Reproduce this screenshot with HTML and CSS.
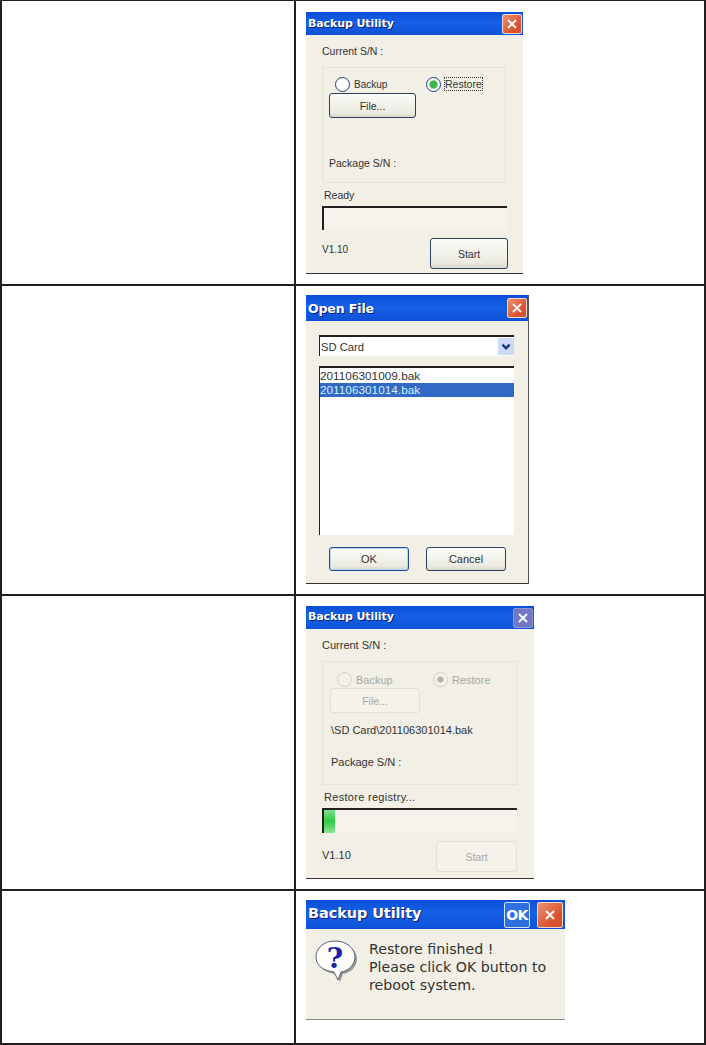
FILE: index.html
```html
<!DOCTYPE html>
<html lang="en">
<head>
    <meta charset="UTF-8">
    <meta name="viewport" content="width=device-width, initial-scale=1.0">
    <title>Backup Utility - Restore</title>
    <link rel="stylesheet" href="styles.css">
</head>
<body>
    <div class="sheet">
        <div class="row row-first">
            <div class="cell-left"></div>
            <div class="cell-right">
                <div class="dialog dialog-ready">
                    <div class="titlebar">
                        <span class="title">Backup Utility</span>
                        <span class="close"><svg viewBox="0 0 12 12"><path d="M2 2l8 8M10 2l-8 8"/></svg></span>
                    </div>
                    <div class="label sn">Current S/N :</div>
                    <div class="group">
                        <div class="radios">
                            <span class="option"><i class="radio"></i>Backup</span>
                            <span class="option"><i class="radio radio-on"></i><b class="focus">Restore</b></span>
                        </div>
                        <div class="btn btn-file">File...</div>
                        <div class="label package">Package S/N :</div>
                    </div>
                    <div class="label status">Ready</div>
                    <div class="progress"></div>
                    <div class="footer">
                        <span class="label version">V1.10</span>
                        <div class="btn btn-start">Start</div>
                    </div>
                </div>
            </div>
        </div>

        <div class="row row-second">
            <div class="cell-left"></div>
            <div class="cell-right">
                <div class="dialog dialog-open">
                    <div class="titlebar">
                        <span class="title">Open File</span>
                        <span class="close"><svg viewBox="0 0 12 12"><path d="M2 2l8 8M10 2l-8 8"/></svg></span>
                    </div>
                    <div class="combo">
                        <span>SD Card</span>
                        <span class="combo-arrow"><svg viewBox="0 0 10 10"><path d="M2 3l3 3 3-3"/></svg></span>
                    </div>
                    <div class="filelist">
                        <div class="file">201106301009.bak</div>
                        <div class="file file-selected">201106301014.bak</div>
                    </div>
                    <div class="actions">
                        <div class="btn btn-ok">OK</div>
                        <div class="btn btn-cancel">Cancel</div>
                    </div>
                </div>
            </div>
        </div>

        <div class="row row-third">
            <div class="cell-left"></div>
            <div class="cell-right">
                <div class="dialog dialog-running">
                    <div class="titlebar">
                        <span class="title">Backup Utility</span>
                        <span class="close close-off"><svg viewBox="0 0 12 12"><path d="M2 2l8 8M10 2l-8 8"/></svg></span>
                    </div>
                    <div class="label sn">Current S/N :</div>
                    <div class="group">
                        <div class="radios">
                            <span class="option option-off"><i class="radio"></i>Backup</span>
                            <span class="option option-off"><i class="radio radio-off"></i>Restore</span>
                        </div>
                        <div class="btn btn-file btn-off">File...</div>
                        <div class="label path">\SD Card\201106301014.bak</div>
                        <div class="label package">Package S/N :</div>
                    </div>
                    <div class="label status">Restore registry...</div>
                    <div class="progress"><div class="progress-chunk"></div></div>
                    <div class="footer">
                        <span class="label version">V1.10</span>
                        <div class="btn btn-start btn-off">Start</div>
                    </div>
                </div>
            </div>
        </div>

        <div class="row row-last">
            <div class="cell-left"></div>
            <div class="cell-right">
                <div class="dialog dialog-message">
                    <div class="titlebar">
                        <span class="title">Backup Utility</span>
                        <span class="ok-button">OK</span>
                        <span class="close"><svg viewBox="0 0 12 12"><path d="M2 2l8 8M10 2l-8 8"/></svg></span>
                    </div>
                    <div class="message">
                        <svg class="question" viewBox="0 0 44 44">
                            <path class="question-shadow" d="M22 3C33 3 42 10 42 19c0 8-7 14-14 15l-3 8-4-8C10 33 3 27 3 19 3 10 11 3 22 3z"/>
                            <path class="question-bubble" d="M20 1C31 1 40 8 40 17c0 8-7 14-14 15l-3 8-4-8C8 31 1 25 1 17 1 8 9 1 20 1z"/>
                            <text x="20" y="28" class="question-mark">?</text>
                        </svg>
                        <div class="message-text">Restore finished !<br>Please click OK button to<br>reboot system.</div>
                    </div>
                </div>
            </div>
        </div>
    </div>
</body>
</html>
```

FILE: styles.css
```css
* {
    box-sizing: border-box;
}

body {
    margin: 0;
    padding: 0;
    background-color: #fff;
    font-family: "Liberation Sans", Arial, sans-serif;
    color: #333;
}

.sheet {
    width: 706px;
    height: 1045px;
    border-top: 1px solid #231f20;
    border-left: 2px solid #231f20;
    border-right: 2px solid #231f20;
    display: flex;
    flex-direction: column;
}

.row {
    display: grid;
    grid-template-columns: 292px 1fr;
    border-bottom: 2px solid #231f20;
}

.row-first { height: 285px; }
.row-second { height: 310px; }
.row-third { height: 295px; }
.row-last { height: 154px; }

.cell-right {
    border-left: 2px solid #231f20;
    padding-left: 10px;
}

.row-first .cell-right { padding-top: 11px; }
.row-second .cell-right { padding-top: 9px; }
.row-third .cell-right { padding-top: 10px; }
.row-last .cell-right { padding-top: 9px; }

/* dialogs */
.dialog {
    background-color: #f1efe6;
    border-bottom: 1px solid #333;
}

.dialog-ready {
    width: 217px;
    height: 262px;
    padding-left: 16px;
}

.dialog-open {
    width: 223px;
    height: 289px;
    border-right: 1px solid #555;
    padding-left: 13px;
}

.dialog-running {
    width: 228px;
    height: 273px;
    padding-left: 16px;
}

.dialog-message {
    width: 259px;
    height: 120px;
    border-bottom-color: #888;
}

.titlebar {
    display: flex;
    align-items: center;
    justify-content: space-between;
    height: 23px;
    padding: 0 1px 0 2px;
    background: linear-gradient(to bottom, #0a4fd6, #1460e6 45%, #0f52d8);
}

.dialog-ready .titlebar,
.dialog-running .titlebar {
    margin-left: -16px;
}

.dialog-running .title {
    margin-bottom: 2px;
}

.dialog-open .titlebar {
    height: 26px;
    margin-left: -13px;
}

.dialog-message .titlebar {
    height: 29px;
}

.title {
    font-family: "DejaVu Sans", sans-serif;
    font-size: 11px;
    font-weight: bold;
    letter-spacing: -0.1px;
    color: #fff;
    text-shadow: 1px 1px 0 #0b1f70;
}

.dialog-open .title {
    font-size: 12.5px;
}

.dialog-message .title {
    flex: 1;
    margin-bottom: 3px;
    font-size: 14.5px;
}

.close {
    display: flex;
    align-items: center;
    justify-content: center;
    width: 20px;
    height: 20px;
    border: 1px solid #f2d6cc;
    border-radius: 2px;
    background: linear-gradient(135deg, #ec9272, #d8512e 70%);
}

.close svg {
    width: 12px;
    height: 12px;
    fill: none;
    stroke: #fff;
    stroke-width: 1.8;
}

.close-off {
    border-color: #8f94d6;
    background: #7277c4;
}

.dialog-message .close {
    width: 26px;
    height: 26px;
    margin-left: 7px;
    margin-right: 1px;
}

.ok-button {
    display: flex;
    align-items: center;
    justify-content: center;
    width: 26px;
    height: 26px;
    border: 1px solid #cfe0fa;
    border-radius: 2px;
    background-color: #2f6fe0;
    color: #fff;
    font-family: "DejaVu Sans", sans-serif;
    font-size: 14px;
    font-weight: bold;
    letter-spacing: -0.5px;
}

.label {
    font-size: 10.5px;
    line-height: 16px;
    white-space: nowrap;
}

.dialog-running .label {
    font-size: 11px;
}

.sn {
    margin-top: 8px;
}

.group {
    margin-top: 8px;
    border: 1px solid #e6e3d7;
    padding-top: 7px;
    padding-left: 6px;
}

.dialog-ready .group {
    width: 184px;
    height: 116px;
}

.dialog-running .group {
    width: 195px;
    height: 124px;
    padding-top: 9px;
    padding-left: 7px;
}

.radios {
    display: flex;
    height: 18px;
    padding-left: 6px;
}

.option {
    display: flex;
    flex: none;
    align-items: center;
    gap: 4px;
    width: 91px;
    font-size: 10px;
}

.dialog-running .radios {
    height: 17px;
    padding-left: 7px;
}

.dialog-running .option {
    width: 96px;
}

.option-off {
    color: #a9a79c;
    font-size: 11px;
}

.radio {
    display: block;
    flex: none;
    width: 15px;
    height: 15px;
    border: 1px solid #1f3f78;
    border-radius: 50%;
    background-color: #fff;
}

.radio-on {
    background: radial-gradient(circle, #3fb54a 0, #3fb54a 35%, #fff 55%);
}

.option-off .radio {
    border-color: #d4d2c6;
    background-color: #f3f1e8;
}

.radio-off {
    background: radial-gradient(circle, #b3b1a5 0, #b3b1a5 30%, #f3f1e8 36%);
}

.focus {
    font-size: 10.5px;
    font-weight: normal;
    outline: 1px dotted #333;
}

.btn {
    display: flex;
    align-items: center;
    justify-content: center;
    border: 1px solid #2c3f5c;
    border-radius: 3px;
    background: linear-gradient(to bottom, #fbfbf8, #ecebe2 80%, #d9d7ca);
    font-size: 10.5px;
}

.btn-off {
    border-color: #e2dfd3;
    background: #f4f2ea;
    color: #a9a79c;
}

.btn-file {
    width: 87px;
    height: 25px;
}

.dialog-running .btn-file {
    width: 90px;
}

.btn-start {
    width: 78px;
    height: 31px;
}

.dialog-running .btn-start {
    width: 81px;
}

.package {
    margin-top: 37px;
}

.path {
    margin-top: 9px;
    margin-left: 1px;
}

.dialog-running .package {
    margin-top: 16px;
    margin-left: 1px;
}

.status {
    margin-top: 4px;
    margin-left: 2px;
}

.dialog-running .status {
    letter-spacing: 0.3px;
}

.progress {
    margin-top: 3px;
    height: 24px;
    border-top: 2px solid #222;
    border-left: 2px solid #222;
    background-color: #f5f3eb;
}

.dialog-ready .progress {
    width: 185px;
}

.dialog-running .progress {
    width: 195px;
    height: 25px;
}

.progress-chunk {
    width: 11px;
    height: 100%;
    background: linear-gradient(to bottom, #7fe08a, #2ecb45 50%, #8fe79a);
}

.footer {
    display: flex;
    align-items: center;
    justify-content: space-between;
    margin-top: 8px;
}

.dialog-ready .footer {
    width: 186px;
}

.dialog-running .footer {
    width: 195px;
}

.version {
    font-size: 10px;
    margin-bottom: 8px;
}

.dialog-running .version {
    margin-bottom: 4px;
}

/* open file dialog */
.combo {
    display: flex;
    align-items: center;
    justify-content: space-between;
    width: 195px;
    height: 21px;
    margin-top: 14px;
    padding-left: 1px;
    border-top: 2px solid #222;
    border-left: 1px solid #222;
    background-color: #fff;
    font-size: 11.2px;
}

.combo-arrow {
    display: flex;
    align-items: center;
    justify-content: center;
    width: 16px;
    height: 17px;
    background-color: #cbd9f4;
}

.combo-arrow svg {
    width: 12px;
    height: 12px;
    fill: none;
    stroke: #1c3a8a;
    stroke-width: 2;
}

.filelist {
    width: 195px;
    height: 169px;
    margin-top: 10px;
    padding-top: 1px;
    border-top: 2px solid #222;
    border-left: 1px solid #222;
    background-color: #fff;
}

.file {
    height: 14px;
    font-size: 11.8px;
    line-height: 14px;
}

.file-selected {
    background-color: #316ac5;
    color: #cfeeff;
}

.actions {
    display: flex;
    gap: 17px;
    margin-top: 12px;
    margin-left: 10px;
}

.actions .btn {
    width: 80px;
    height: 24px;
    font-size: 11px;
}

.btn-ok {
    border-color: #1c4f9c;
    box-shadow: inset 0 0 0 1px #bcd2f2;
}

/* message box */
.message {
    display: flex;
    padding: 11px 0 0 9px;
}

.question {
    flex: none;
    width: 44px;
    height: 44px;
}

.question-shadow {
    fill: #9a9a92;
}

.question-bubble {
    fill: #fff;
    stroke: #55606e;
    stroke-width: 1;
}

.question-mark {
    font-family: "DejaVu Serif", serif;
    font-size: 28px;
    font-weight: bold;
    fill: #1c1fa8;
    text-anchor: middle;
}

.message-text {
    margin-left: 10px;
    font-family: "DejaVu Sans", sans-serif;
    font-size: 14.2px;
    line-height: 18px;
    white-space: nowrap;
}
```
